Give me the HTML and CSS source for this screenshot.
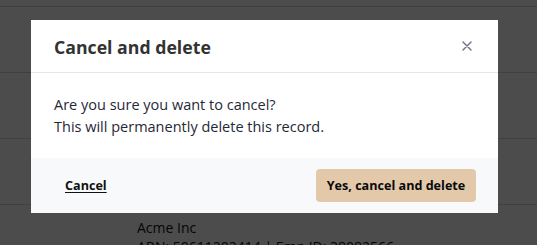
FILE: index.html
```html
<!DOCTYPE html>
<html>
<head>
    <link rel="stylesheet" href="styles.css">
</head>
<body>
<div class="page">
    <div class="row"></div>
    <div class="row"></div>
    <div class="row"></div>
    <div class="row last">
        <p class="company">Acme Inc</p>
        <p class="company-meta">ABN: 50611202414 | Emp ID: 38082566</p>
    </div>
</div>

<div class="overlay"></div>

<div class="modal">
    <div class="modal-header">
        <h2>Cancel and delete</h2>
        <button type="button" class="close-btn" aria-label="Close">
            <svg width="10" height="10" viewBox="0 0 10 10">
                <path d="M1 1L9 9M9 1L1 9" stroke="#6b7280" stroke-width="1.4" stroke-linecap="round"/>
            </svg>
        </button>
    </div>
    <div class="modal-body">
        <p>Are you sure you want to cancel?</p>
        <p>This will permanently delete this record.</p>
    </div>
    <div class="modal-footer">
        <button type="button" class="link-btn">Cancel</button>
        <button type="button" class="confirm-btn">Yes, cancel and delete</button>
    </div>
</div>
</body>
</html>
```

FILE: styles.css
```css
*{
    margin: 0;
    padding: 0;
    box-sizing: border-box;
}
body {
    width: 100%;
    height: 100vh;
    overflow: hidden;
    font-family: "Open Sans", Arial, sans-serif;
    background-color: #ffffff;
}

.page {
    padding-top: 6px;
}

.row {
    height: 66px;
    border-top: 1px solid #d6d6d6;
}

.row.last {
    padding: 13px 0 0 137px;
    font-size: 14px;
    line-height: 19px;
    color: #111111;
}

.overlay {
    position: fixed;
    top: 0;
    left: 0;
    right: 0;
    bottom: 0;
    background: rgba(0, 0, 0, 0.7);
}

.modal {
    position: absolute;
    top: 20px;
    left: 31px;
    width: 467px;
    background: #fff;
    overflow: hidden;
}

.modal-header {
    display: flex;
    align-items: center;
    justify-content: space-between;
    height: 53px;
    padding: 0 26px 0 23px;
    border-bottom: 1px solid #e5e7eb;
}

.modal-header h2 {
    font-size: 17.7px;
    font-weight: 700;
    color: #333333;
    margin-top: 1px;
}

.close-btn {
    background: none;
    border: none;
    width: 10px;
    height: 10px;
    display: flex;
}

.modal-body {
    padding: 21px 23px 20px;
    font-size: 14.5px;
    line-height: 22px;
    color: #1f2937;
}

.modal-footer {
    display: flex;
    align-items: center;
    justify-content: space-between;
    height: 55px;
    padding: 0 22px 0 34px;
    background: #f8f9fb;
}

.link-btn {
    background: none;
    border: none;
    font-family: inherit;
    font-size: 12.6px;
    font-weight: 700;
    color: #111111;
    text-decoration: underline;
    text-underline-offset: 2px;
}

.confirm-btn {
    height: 33px;
    width: 160px;
    border: none;
    border-radius: 4px;
    background: #e3c9aa;
    font-family: inherit;
    font-size: 12.6px;
    font-weight: 700;
    color: #0a0a0a;
}
```
